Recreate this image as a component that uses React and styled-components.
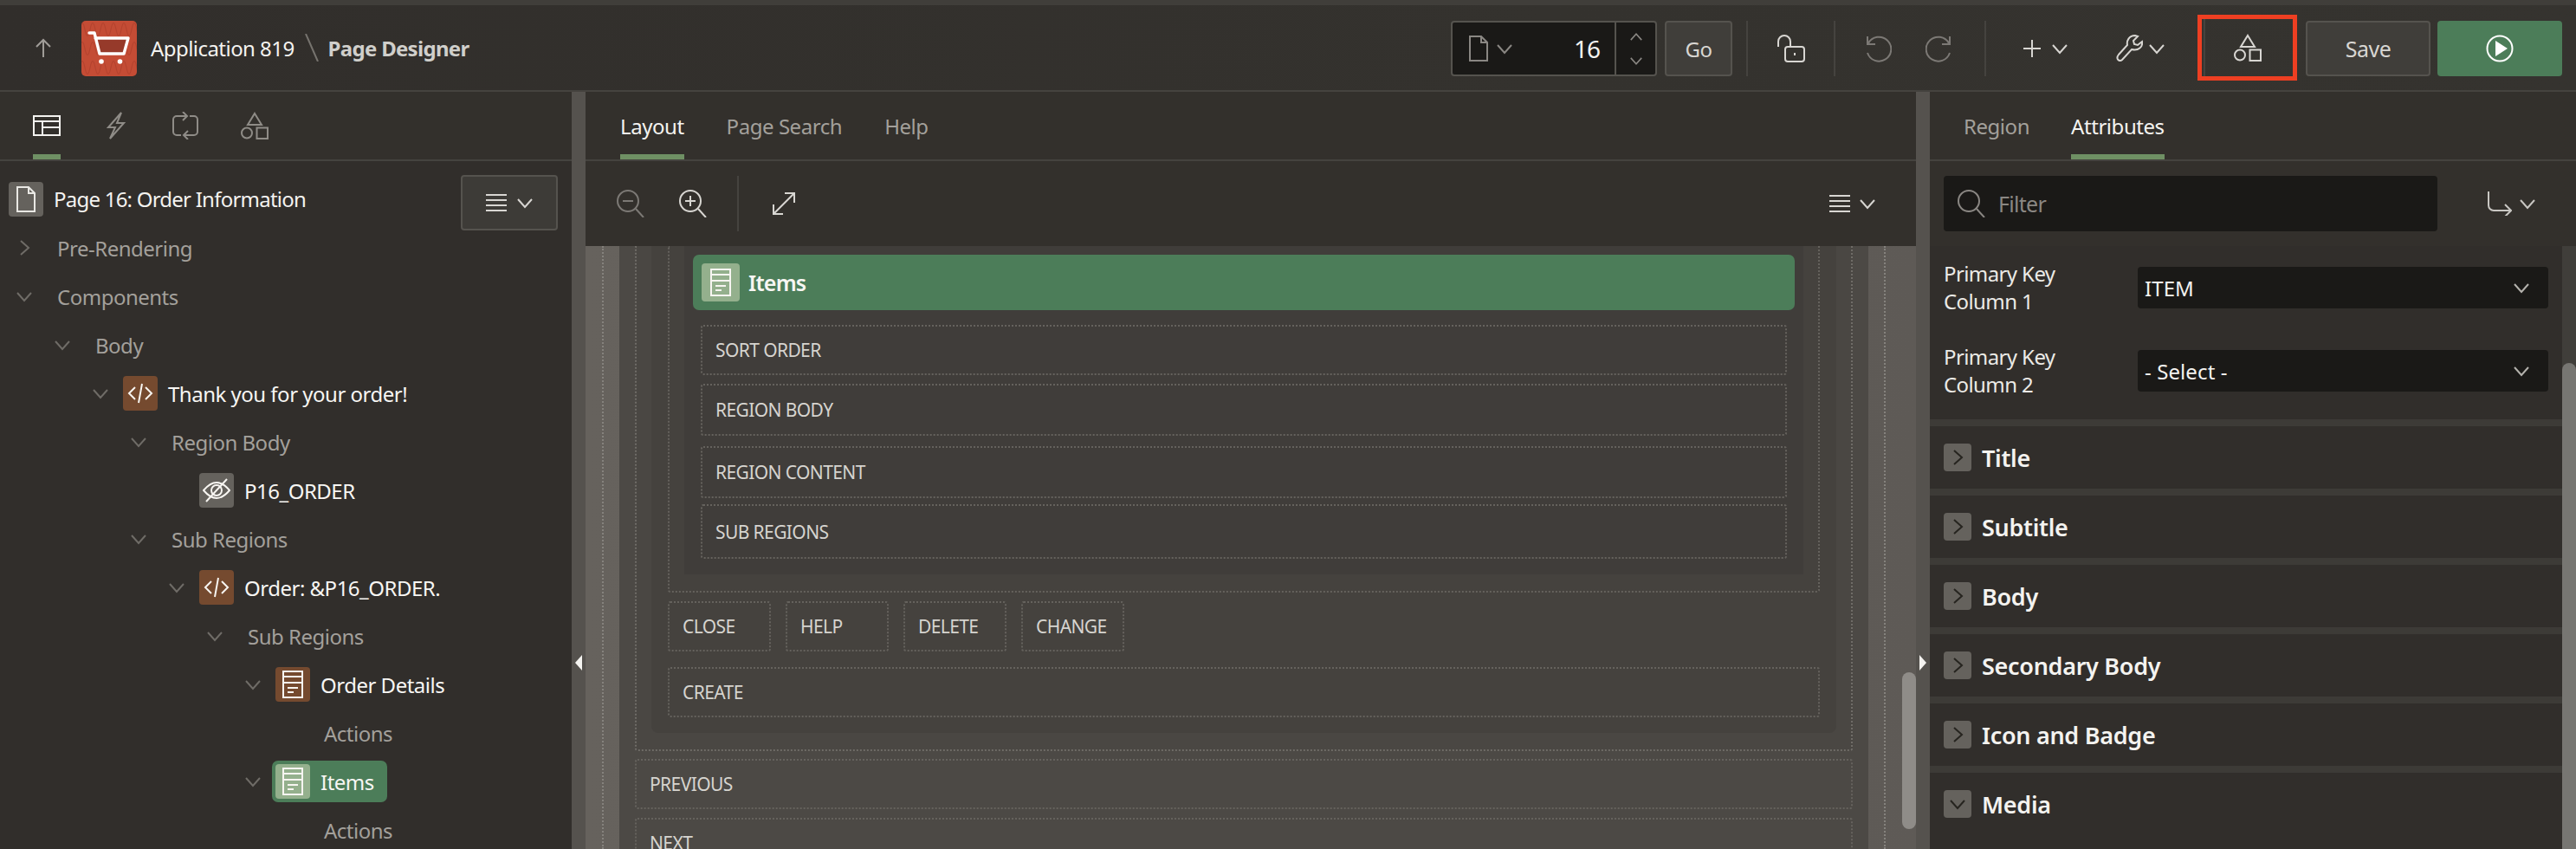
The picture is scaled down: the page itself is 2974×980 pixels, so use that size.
import React from "react";
import styled, { createGlobalStyle } from "styled-components";

const GlobalStyle = createGlobalStyle`
  html, body {
    margin: 0;
    padding: 0;
    width: 2974px;
    height: 980px;
    overflow: hidden;
    background: #312e2b;
    font-family: "Noto Sans", "Open Sans", sans-serif;
  }
  * { box-sizing: border-box; }
`;

const Glyph = styled.svg.attrs((p) => ({ viewBox: p.$box || "0 0 32 32" }))`
  display: block;
  flex: none;
  width: ${(p) => p.$w || 32}px;
  height: ${(p) => p.$h || p.$w || 32}px;
  fill: none;
  stroke: ${(p) => p.$c || "currentColor"};
  stroke-width: ${(p) => p.$sw || 2};
`;

const Chevron = ({ dir = "down", w = 18, c, sw = 2 }) => (
  <Glyph $box="0 0 18 18" $w={w} $c={c} $sw={sw}>
    {dir === "down" && <path d="M1 5l8 9 8-9" />}
    {dir === "up" && <path d="M1 13l8-9 8 9" />}
    {dir === "right" && <path d="M5 1l9 8-9 8" />}
  </Glyph>
);

const PageGlyph = ({ w = 24, h = 32, c }) => (
  <Glyph $box="0 0 24 32" $w={w} $h={h} $c={c}>
    <path d="M2 2h13l7 7v21H2z" />
    <path d="M15 2v7h7" />
  </Glyph>
);

const ShapesGlyph = ({ c }) => (
  <Glyph $c={c}>
    <path d="M16 2l8 13H8z" />
    <circle cx="7" cy="24.5" r="6" />
    <rect x="18.5" y="18.5" width="12.5" height="12.5" />
  </Glyph>
);

const MenuGlyph = ({ c }) => (
  <Glyph $box="0 0 24 20" $w={24} $h={20} $c={c}>
    <path d="M0 1h24M0 7h24M0 13h24M0 19h24" />
  </Glyph>
);

const CodeGlyph = () => (
  <Glyph>
    <path d="M10 9l-7 7 7 7M22 9l7 7-7 7M18 5l-4 22" />
  </Glyph>
);

const RegionGlyph = () => (
  <Glyph>
    <rect x="5" y="1" width="22" height="30" />
    <path d="M5 7h22M5 14h22M10 20h12M10 25h7" />
  </Glyph>
);

const HiddenGlyph = () => (
  <Glyph>
    <path d="M1 16c6-7 10-9 15-9s9 2 15 9c-6 7-10 9-15 9s-9-2-15-9z" />
    <circle cx="16" cy="16" r="6" />
    <path d="M28 3L4 29" />
  </Glyph>
);

const Frame = styled.div`
  width: 2974px;
  height: 980px;
  display: flex;
  flex-direction: column;
  overflow: hidden;
  background: #312e2b;
  color: #f2f1ee;
`;

const TopStrip = styled.div`
  height: 6px;
  flex: none;
  background: #403e3a;
`;

const Header = styled.header`
  height: 100px;
  flex: none;
  display: flex;
  align-items: flex-start;
  padding: 18px 16px 0 41px;
  border-bottom: 2px solid #45433f;
  background: linear-gradient(90deg, #312e2b 0%, #34322e 60%, #35332f 100%);
`;

const BackArrow = styled.div`
  margin-top: 20px;
  color: #a09d98;
`;

const Logo = styled.div`
  width: 64px;
  height: 64px;
  margin-left: 35px;
  border-radius: 5px;
  background: #c44c35;
  overflow: hidden;
`;

const AppName = styled.span`
  margin-left: 16px;
  font-size: 24px;
  line-height: 64px;
  color: #f4f3f0;
  letter-spacing: -0.55px;
  white-space: nowrap;
`;

const Slash = styled.div`
  margin: 15px 11px 0 12px;
  color: #76736e;
`;

const PageName = styled.span`
  font-size: 24px;
  font-weight: 700;
  line-height: 64px;
  color: #d0cfcb;
  letter-spacing: -0.7px;
  white-space: nowrap;
`;

const Tools = styled.div`
  margin-left: auto;
  display: flex;
  align-items: flex-start;
`;

const PageSelect = styled.div`
  width: 238px;
  height: 64px;
  display: flex;
  align-items: center;
  border: 2px solid #55534e;
  border-radius: 4px;
  background: #1a1917;
`;

const PageSelectIcon = styled.div`
  display: flex;
  align-items: center;
  gap: 9px;
  margin-left: 18px;
  color: #8a8783;
`;

const PageNumber = styled.span`
  flex: 1;
  text-align: right;
  padding-right: 17px;
  font-size: 28px;
  color: #f4f3f0;
  letter-spacing: -1px;
`;

const Spinner = styled.div`
  width: 47px;
  height: 100%;
  display: flex;
  flex-direction: column;
  align-items: center;
  justify-content: center;
  gap: 13px;
  border-left: 2px solid #55534e;
  color: #8a8783;
`;

const GrayButton = styled.div`
  width: ${(p) => p.$w}px;
  height: 64px;
  margin-left: ${(p) => p.$ml || 0}px;
  display: flex;
  align-items: center;
  justify-content: center;
  border: 2px solid #55534e;
  border-radius: 4px;
  background: #403e3a;
  color: #d8d6d2;
  font-size: ${(p) => p.$fs || 24}px;
  letter-spacing: -0.5px;
`;

const RunButton = styled.div`
  width: 144px;
  height: 64px;
  margin-left: 8px;
  display: flex;
  align-items: center;
  justify-content: center;
  border-radius: 4px;
  background: #4c7d59;
  color: #fff;
`;

const ToolSep = styled.div`
  width: 2px;
  height: 64px;
  margin-left: ${(p) => p.$ml || 0}px;
  background: #45433f;
`;

const ToolSlot = styled.div`
  width: ${(p) => p.$w}px;
  height: 64px;
  display: flex;
  align-items: center;
  justify-content: center;
  color: ${(p) => p.$c || "#d8d6d2"};
`;

const ToolMenu = styled.div`
  height: 64px;
  margin-left: ${(p) => p.$ml}px;
  display: flex;
  align-items: center;
  gap: ${(p) => p.$gap}px;
  color: #d8d6d2;
`;

const MarkedTool = styled.div`
  width: 115px;
  height: 76px;
  margin: -7px 10px 0 38px;
  display: flex;
  align-items: center;
  justify-content: center;
  border: 5px solid #ee3f22;
  color: #d8d6d2;
  position: relative;

  &::before {
    content: "";
    position: absolute;
    left: 2px;
    top: 0;
    bottom: 0;
    width: 2px;
    background: #45433f;
  }
`;

const Workspace = styled.main`
  flex: 1;
  min-height: 0;
  display: flex;
`;

const Panel = styled.section`
  width: ${(p) => p.$w}px;
  flex: none;
  display: flex;
  flex-direction: column;
  overflow: hidden;
  position: relative;
  background: #312e2b;
`;

const Splitter = styled.div`
  width: 16px;
  flex: none;
  position: relative;
  background: #55524e;
`;

const SplitterArrow = styled.span`
  position: absolute;
  top: 650px;
  left: 4px;
  width: 0;
  height: 0;
  border-top: 9px solid transparent;
  border-bottom: 9px solid transparent;
  ${(p) =>
    p.$left
      ? "border-right: 8px solid #f4f3f0;"
      : "border-left: 8px solid #f4f3f0;"}
`;

const TabBar = styled.nav`
  height: 80px;
  flex: none;
  display: flex;
  align-items: stretch;
  gap: ${(p) => p.$gap || 0}px;
  padding-left: ${(p) => p.$pl}px;
  border-bottom: 2px solid #45433f;
  background: #33302c;
`;

const Tab = styled.div`
  height: 78px;
  display: flex;
  align-items: center;
  padding-top: 6px;
  font-size: 24px;
  letter-spacing: -0.45px;
  color: ${(p) => (p.$on ? "#f4f3f0" : "#a3a09b")};
  border-bottom: 6px solid ${(p) => (p.$on ? "#6f9064" : "transparent")};
`;

const IconTab = styled(Tab)`
  width: 32px;
  margin-right: ${(p) => p.$mr}px;
  justify-content: center;
  color: ${(p) => (p.$on ? "#f4f3f0" : "#8f8c87")};
`;

const PageRow = styled.div`
  height: 72px;
  flex: none;
  display: flex;
  align-items: flex-start;
  padding: 16px 16px 0 10px;
`;

const PageBadge = styled.div`
  width: 40px;
  height: 40px;
  margin-top: 8px;
  display: flex;
  align-items: center;
  justify-content: center;
  border-radius: 4px;
  background: #65625d;
  color: #e9e8e4;
`;

const PageTitle = styled.span`
  flex: 1;
  margin: 8px 0 0 12px;
  font-size: 24px;
  line-height: 40px;
  letter-spacing: -0.77px;
  color: #f4f3f0;
  white-space: nowrap;
`;

const MenuButton = styled.div`
  width: 112px;
  height: 64px;
  display: flex;
  align-items: center;
  justify-content: center;
  gap: 12px;
  border: 2px solid #55534e;
  border-radius: 4px;
  background: #3d3b37;
  color: #d8d6d2;
`;

const Row = styled.div`
  height: 56px;
  flex: none;
  display: flex;
  align-items: center;
  padding-left: ${(p) => 14 + p.$level * 44}px;
`;

const ChevronSlot = styled.div`
  width: 28px;
  flex: none;
  display: flex;
  justify-content: center;
  color: #6f6c67;
`;

const RowLabel = styled.span`
  margin-left: 24px;
  font-size: 24px;
  letter-spacing: -0.5px;
  color: #a3a09b;
  white-space: nowrap;
`;

const RowNode = styled.div`
  display: flex;
  align-items: center;
  height: 48px;
  margin-left: 8px;
  padding: 0 4px;
  border-radius: 7px;
  background: ${(p) => (p.$on ? "#4c7d59" : "transparent")};
  ${(p) => p.$on && "padding-right: 15px;"}
`;

const NodeBadge = styled.div`
  width: 40px;
  height: 40px;
  display: flex;
  align-items: center;
  justify-content: center;
  border-radius: 4px;
  color: #f7f5f1;
  background: ${(p) => p.$bg};
`;

const NodeLabel = styled.span`
  margin-left: 12px;
  font-size: 24px;
  letter-spacing: -0.5px;
  color: #f7f6f3;
  white-space: nowrap;
`;

const DesignerTools = styled.div`
  height: 98px;
  flex: none;
  display: flex;
  align-items: center;
  padding: 0 47px 0 36px;
  background: #33302c;
  color: #d8d6d2;
`;

const ZoomSlot = styled.div`
  margin-right: ${(p) => p.$mr}px;
  color: ${(p) => p.$c || "inherit"};
`;

const DesignerSep = styled.div`
  width: 2px;
  height: 64px;
  margin-right: 38px;
  background: #45433f;
`;

const DesignerMenu = styled.div`
  margin-left: auto;
  display: flex;
  align-items: center;
  gap: 11px;
`;

const Canvas = styled.div`
  flex: 1;
  min-height: 0;
  overflow: hidden;
  position: relative;
  padding: 0 35px 0 19px;
  background: linear-gradient(90deg, #66625d 0%, #5e5a56 100%);
`;

const Dropzone = styled.div`
  padding: 0 18px;
  border-left: 2px dotted #85827d;
  border-right: 2px dotted #85827d;
  height: 100%;
`;

const PageBody = styled.div`
  padding: 0 18px;
  height: 100%;
  background: #4c4945;
`;

const RegionDrop = styled.div`
  padding: 0 17px 19px;
  border: 2px dotted #6f6c67;
  border-top: none;
  border-radius: 0 0 3px 3px;
  background: #4a4743;
`;

const RegionPanel = styled.div`
  padding: 0 19px 18px;
  border-radius: 0 0 8px 8px;
  background: #45423e;
`;

const InnerDrop = styled.div`
  padding: 0 17px 19px;
  border: 2px dotted #65625d;
  border-top: none;
  border-radius: 0 0 3px 3px;
`;

const InnerBody = styled.div`
  padding: 10px 10px 18px;
  background: #403d3a;
`;

const SelectedRegion = styled.div`
  height: 64px;
  display: flex;
  align-items: center;
  padding-left: 10px;
  margin-bottom: 17px;
  border-radius: 7px;
  background: #4c7d59;
`;

const SelectedBadge = styled.div`
  width: 44px;
  height: 44px;
  display: flex;
  align-items: center;
  justify-content: center;
  border-radius: 4px;
  color: #f7f5f1;
  background: #94b08d;
`;

const SelectedName = styled.span`
  margin-left: 10px;
  font-size: 25px;
  font-weight: 600;
  letter-spacing: -0.8px;
  color: #f7f6f3;
`;

const Slot = styled.div`
  height: ${(p) => p.$h || 58}px;
  margin: ${(p) => p.$m || "0"};
  width: ${(p) => (p.$w ? `${p.$w}px` : "auto")};
  flex: none;
  display: flex;
  align-items: center;
  padding-left: 15px;
  border: 2px dotted #65625d;
  border-radius: 3px;
  font-size: 21px;
  letter-spacing: -0.6px;
  color: #d6d4cf;
  white-space: nowrap;
`;

const ButtonsRow = styled.div`
  display: flex;
  gap: 17px;
  margin-top: 10px;
`;

const Scrollbar = styled.div`
  position: absolute;
  right: 0;
  top: ${(p) => p.$top}px;
  width: 16px;
  height: ${(p) => p.$h}px;
  border-radius: 8px;
  background: ${(p) => p.$c};
`;

const RightTrack = styled.div`
  position: absolute;
  right: 0;
  top: 178px;
  bottom: 0;
  width: 16px;
  background: #403e3a;
`;

const FilterRow = styled.div`
  height: 98px;
  flex: none;
  display: flex;
  align-items: center;
  padding-left: 16px;
  background: #33302c;
`;

const FilterBox = styled.div`
  width: 570px;
  height: 64px;
  display: flex;
  align-items: center;
  padding-left: 16px;
  gap: 15px;
  border-radius: 4px;
  background: #1a1917;
  color: #8a8783;
  font-size: 25px;
  letter-spacing: -0.7px;
`;

const GoToMenu = styled.div`
  margin-left: 58px;
  display: flex;
  align-items: center;
  gap: 9px;
  color: #c9c7c3;
`;

const Properties = styled.div`
  width: 730px;
  padding: 16px 16px 24px;
  display: flex;
  flex-direction: column;
  gap: 32px;
`;

const PropertyRow = styled.div`
  height: 64px;
  display: flex;
  align-items: center;
`;

const PropertyLabel = styled.label`
  width: 224px;
  flex: none;
  padding-right: 60px;
  font-size: 24px;
  line-height: 32px;
  letter-spacing: -0.6px;
  color: #ebeae6;
`;

const SelectBox = styled.div`
  flex: 1;
  height: 48px;
  display: flex;
  align-items: center;
  justify-content: space-between;
  padding: 0 22px 0 8px;
  border-radius: 4px;
  background: #1a1917;
  font-size: 24px;
  letter-spacing: 0.1px;
  color: #f4f3f0;
`;

const SelectArrow = styled.span`
  color: #b5b3ae;
`;

const Section = styled.div`
  width: 730px;
  height: 80px;
  flex: none;
  display: flex;
  align-items: center;
  padding: 8px 0 0 16px;
  border-top: 8px solid #3d3b37;
  margin-top: 0;
`;

const SectionToggle = styled.div`
  width: 32px;
  height: 32px;
  margin-top: -8px;
  display: flex;
  align-items: center;
  justify-content: center;
  border-radius: 4px;
  background: #65625d;
  color: #26241f;
`;

const SectionTitle = styled.span`
  margin: -7px 0 0 12px;
  font-size: 27px;
  font-weight: 600;
  letter-spacing: -0.3px;
  color: #f4f3f0;
`;

const TREE = [
  { level: 0, label: "Pre-Rendering", chevron: "right" },
  { level: 0, label: "Components", chevron: "down" },
  { level: 1, label: "Body", chevron: "down" },
  { level: 2, label: "Thank you for your order!", chevron: "down", node: "code" },
  { level: 3, label: "Region Body", chevron: "down" },
  { level: 4, label: "P16_ORDER", node: "hidden" },
  { level: 3, label: "Sub Regions", chevron: "down" },
  { level: 4, label: "Order: &P16_ORDER.", chevron: "down", node: "code" },
  { level: 5, label: "Sub Regions", chevron: "down" },
  { level: 6, label: "Order Details", chevron: "down", node: "region" },
  { level: 7, label: "Actions" },
  { level: 6, label: "Items", chevron: "down", node: "region", on: true },
  { level: 7, label: "Actions" },
];

const SECTIONS = ["Title", "Subtitle", "Body", "Secondary Body", "Icon and Badge", "Media"];

// squiggle rows behind the cart in the app logo
const LOGO_WAVES = [2, 24, 46];

const TreeRow = ({ item }) => {
  const glyph = {
    code: <CodeGlyph />,
    hidden: <HiddenGlyph />,
    region: <RegionGlyph />,
  }[item.node];
  const bg = item.on ? "#94b08d" : item.node === "hidden" ? "#65625d" : "#754a2f";

  return (
    <Row $level={item.level}>
      <ChevronSlot>
        {item.chevron && <Chevron dir={item.chevron} c="#6f6c67" />}
      </ChevronSlot>
      {item.node ? (
        <RowNode $on={item.on}>
          <NodeBadge $bg={bg}>{glyph}</NodeBadge>
          <NodeLabel>{item.label}</NodeLabel>
        </RowNode>
      ) : (
        <RowLabel>{item.label}</RowLabel>
      )}
    </Row>
  );
};

const App = () => (
  <Frame>
    <GlobalStyle />
    <TopStrip />
    <Header>
      <BackArrow>
        <Glyph $box="0 0 18 22" $w={18} $h={22}>
          <path d="M9 22V2M1 10l8-8 8 8" />
        </Glyph>
      </BackArrow>
      <Logo>
        <Glyph $box="0 0 64 64" $w={64} $c="#fff" $sw={3.4}>
          {LOGO_WAVES.map((y) => (
            <path
              key={y}
              d={`M-2 ${y + 8}c2-10 4-10 6 0s4 10 6 0 4-10 6 0 4 10 6 0 4-10 6 0 4 10 6 0 4-10 6 0 4 10 6 0 4-10 6 0 4 10 6 0 4-10 6 0 4 10 6 0`}
              stroke="#b4432f"
              strokeWidth="1.2"
            />
          ))}
          <path d="M17 20h37l-5 18H21z" fill="#963a2a" stroke="none" />
          <path
            d="M9 14h6l6 24h28l5-18H16"
            strokeLinejoin="round"
            strokeLinecap="round"
          />
          <circle cx="23" cy="47" r="2.8" fill="#fff" stroke="none" />
          <circle cx="44.5" cy="47" r="2.8" fill="#fff" stroke="none" />
        </Glyph>
      </Logo>
      <AppName>Application 819</AppName>
      <Slash>
        <Glyph $box="0 0 16 32" $w={16} $h={32}>
          <path d="M1 0l14 32" />
        </Glyph>
      </Slash>
      <PageName>Page Designer</PageName>

      <Tools>
        <PageSelect>
          <PageSelectIcon>
            <PageGlyph w={24} h={32} />
            <Chevron c="#8a8783" />
          </PageSelectIcon>
          <PageNumber>16</PageNumber>
          <Spinner>
            <Chevron dir="up" w={14} />
            <Chevron w={14} />
          </Spinner>
        </PageSelect>
        <GrayButton $w={78} $ml={9}>Go</GrayButton>
        <ToolSep $ml={16} />
        <ToolSlot $w={99}>
          <Glyph>
            <path d="M1 14V8a7 7 0 0 1 14 0v5" />
            <rect x="9" y="14" width="22" height="17" rx="3" />
            <path d="M20 21v3" />
          </Glyph>
        </ToolSlot>
        <ToolSep />
        <ToolSlot $w={98} $c="#7c7975">
          <Glyph>
            <path d="M4 2v9h9" />
            <path d="M5 10a14 14 0 1 1-1 11" />
          </Glyph>
        </ToolSlot>
        <ToolSlot $w={44} $c="#7c7975">
          <Glyph>
            <path d="M28 2v9h-9" />
            <path d="M27 10a14 14 0 1 0 1 11" />
          </Glyph>
        </ToolSlot>
        <ToolSep $ml={30} />
        <ToolMenu $ml={43} $gap={13}>
          <Glyph $box="0 0 20 20" $w={20}>
            <path d="M10 0v20M0 10h20" />
          </Glyph>
          <Chevron />
        </ToolMenu>
        <ToolMenu $ml={55} $gap={7}>
          <Glyph>
            <path d="M4 23L14 12C13 7 16 1 23 1l3 1-5 5 1 4 4 1 5-4c1 6-4 11-12 9L8 29C5 32 0 28 4 23z" />
          </Glyph>
          <Chevron />
        </ToolMenu>
        <MarkedTool>
          <ShapesGlyph />
        </MarkedTool>
        <GrayButton $w={144} $fs={25}>Save</GrayButton>
        <RunButton>
          <Glyph>
            <circle cx="16" cy="16" r="14.5" />
            <path d="M11 7l14 9-14 9z" fill="#fff" stroke="none" />
          </Glyph>
        </RunButton>
      </Tools>
    </Header>

    <Workspace>
      <Panel $w={660}>
        <TabBar $pl={38}>
          <IconTab $on $mr={48}>
            <Glyph $h={24} $box="0 0 32 24" $w={32}>
              <rect x="1" y="1" width="30" height="22" />
              <path d="M1 7h30M11 7v16M11 14h20" />
            </Glyph>
          </IconTab>
          <IconTab $mr={48}>
            <Glyph $box="0 0 24 32" $w={24} $h={32}>
              <path d="M18 1L3 18h8l-6 13 16-18h-8z" />
            </Glyph>
          </IconTab>
          <IconTab $mr={48}>
            <Glyph>
              <path d="M17 5H6a4 4 0 0 0-4 4v14a4 4 0 0 0 4 4h5" />
              <path d="M21 5h5a4 4 0 0 1 4 4v14a4 4 0 0 1-4 4H15" />
              <path d="M13 0l5 5-5 5M19 22l-5 5 5 5" />
            </Glyph>
          </IconTab>
          <IconTab $mr={0}>
            <ShapesGlyph />
          </IconTab>
        </TabBar>
        <PageRow>
          <PageBadge>
            <PageGlyph w={24} h={32} />
          </PageBadge>
          <PageTitle>Page 16: Order Information</PageTitle>
          <MenuButton>
            <MenuGlyph />
            <Chevron />
          </MenuButton>
        </PageRow>
        {TREE.map((item, i) => (
          <TreeRow key={i} item={item} />
        ))}
      </Panel>
      <Splitter>
        <SplitterArrow $left />
      </Splitter>

      <Panel $w={1536}>
        <TabBar $pl={40} $gap={49}>
          <Tab $on>Layout</Tab>
          <Tab>Page Search</Tab>
          <Tab>Help</Tab>
        </TabBar>
        <DesignerTools>
          <ZoomSlot $mr={40} $c="#7c7975">
            <Glyph>
              <circle cx="13" cy="13" r="12" />
              <path d="M22 22l9 10M7 13h12" />
            </Glyph>
          </ZoomSlot>
          <ZoomSlot $mr={35}>
            <Glyph>
              <circle cx="13" cy="13" r="12" />
              <path d="M22 22l9 10M7 13h12M13 7v12" />
            </Glyph>
          </ZoomSlot>
          <DesignerSep />
          <Glyph $box="0 0 28 28" $w={28}>
            <path d="M2 26L26 2M15 2h11v11M2 15v11h11" />
          </Glyph>
          <DesignerMenu>
            <MenuGlyph />
            <Chevron />
          </DesignerMenu>
        </DesignerTools>
        <Canvas>
          <Dropzone>
            <PageBody>
              <RegionDrop>
                <RegionPanel>
                  <InnerDrop>
                    <InnerBody>
                      <SelectedRegion>
                        <SelectedBadge>
                          <RegionGlyph />
                        </SelectedBadge>
                        <SelectedName>Items</SelectedName>
                      </SelectedRegion>
                      <Slot $m="0 9px 10px">SORT ORDER</Slot>
                      <Slot $m="0 9px 12px" $h={60}>REGION BODY</Slot>
                      <Slot $m="0 9px 7px" $h={60}>REGION CONTENT</Slot>
                      <Slot $m="0 9px" $h={63}>SUB REGIONS</Slot>
                    </InnerBody>
                  </InnerDrop>
                  <ButtonsRow>
                    <Slot $w={119}>CLOSE</Slot>
                    <Slot $w={119}>HELP</Slot>
                    <Slot $w={119}>DELETE</Slot>
                    <Slot $w={119}>CHANGE</Slot>
                  </ButtonsRow>
                  <Slot $m="18px 0 0">CREATE</Slot>
                </RegionPanel>
              </RegionDrop>
              <Slot $m="9px 0 10px">PREVIOUS</Slot>
              <Slot>NEXT</Slot>
            </PageBody>
          </Dropzone>
          <Scrollbar $top={492} $h={181} $c="#8f8c88" />
        </Canvas>
      </Panel>
      <Splitter>
        <SplitterArrow />
      </Splitter>

      <Panel $w={746}>
        <TabBar $pl={39} $gap={48}>
          <Tab>Region</Tab>
          <Tab $on>Attributes</Tab>
        </TabBar>
        <FilterRow>
          <FilterBox>
            <Glyph>
              <circle cx="13" cy="13" r="12" />
              <path d="M22 22l9 10" />
            </Glyph>
            Filter
          </FilterBox>
          <GoToMenu>
            <Glyph $box="0 0 28 28" $w={28}>
              <path d="M1 0v16a6 6 0 0 0 6 6h20M20 15l7 7-7 7" />
            </Glyph>
            <Chevron />
          </GoToMenu>
        </FilterRow>
        <RightTrack />
        <Scrollbar $top={313} $h={580} $c="#777672" />
        <Properties>
          <PropertyRow>
            <PropertyLabel>Primary Key Column 1</PropertyLabel>
            <SelectBox>
              ITEM
              <SelectArrow><Chevron /></SelectArrow>
            </SelectBox>
          </PropertyRow>
          <PropertyRow>
            <PropertyLabel>Primary Key Column 2</PropertyLabel>
            <SelectBox>
              - Select -
              <SelectArrow><Chevron /></SelectArrow>
            </SelectBox>
          </PropertyRow>
        </Properties>
        {SECTIONS.map((name) => (
          <Section key={name}>
            <SectionToggle>
              <Chevron dir={name === "Media" ? "down" : "right"} />
            </SectionToggle>
            <SectionTitle>{name}</SectionTitle>
          </Section>
        ))}
      </Panel>
    </Workspace>
  </Frame>
);

export default App;
